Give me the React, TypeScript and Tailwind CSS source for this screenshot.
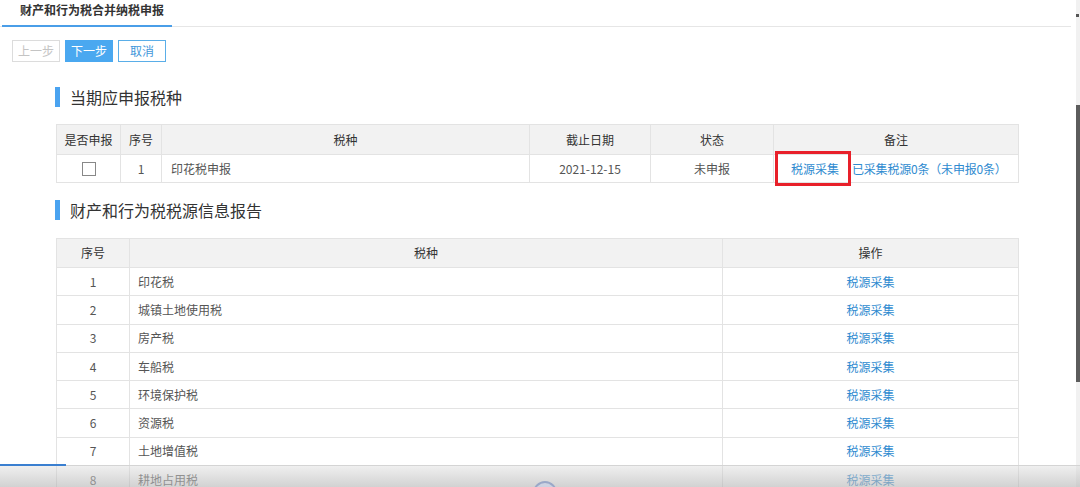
import React from "react";

const font = { fontFamily: '"Noto Sans CJK SC", "Microsoft YaHei", "Liberation Sans", sans-serif' };

const rows2 = ["印花税", "城镇土地使用税", "房产税", "车船税", "环境保护税", "资源税", "土地增值税", "耕地占用税"];

function SectionTitle({ text }: { text: string }) {
  return (
    <div className="flex items-center ml-[55px] h-[20px]">
      <div className="w-[5px] h-[20px] bg-[#4aa3f0]" />
      <div className="ml-[10px] text-[16px] leading-[20px] text-[#333]">{text}</div>
    </div>
  );
}

export default function App() {
  return (
    <div className="relative w-[1080px] h-[487px] overflow-hidden bg-white flex" style={font}>
      <div className="flex-1 flex flex-col">
        {/* tab bar */}
        <div className="h-[27px] w-[1071px] border-b border-[#e6e6e6] flex">
          <div className="ml-[2px] w-[170px] h-[27px] border-b-2 border-[#4a9ee8] pl-[18px] pt-[2px] text-[12px] leading-[16px] font-bold text-[#333]">
            财产和行为税合并纳税申报
          </div>
        </div>
        {/* buttons */}
        <div className="mt-[13px] ml-[12px] flex gap-[5px]">
          <div className="w-[48px] h-[22px] border border-[#dcdcdc] text-[#c4c4c4] text-[12px] flex items-center justify-center">上一步</div>
          <div className="w-[48px] h-[22px] bg-[#4aa8f0] text-white text-[12px] flex items-center justify-center">下一步</div>
          <div className="w-[48px] h-[22px] border border-[#5aaee8] text-[#3f97da] text-[12px] flex items-center justify-center">取消</div>
        </div>

        <div className="mt-[25px]">
          <SectionTitle text="当期应申报税种" />
        </div>

        {/* table 1 */}
        <div className="mt-[17px] ml-[56px] w-[963px] border border-[#e3e3e3] text-[12px] text-[#555]">
          <div className="flex h-[29px] bg-[#f2f2f2] text-[#333]">
            <div className="w-[64px] flex items-center justify-center border-r border-[#e3e3e3]">是否申报</div>
            <div className="w-[41px] flex items-center justify-center border-r border-[#e3e3e3]">序号</div>
            <div className="w-[368px] flex items-center justify-center border-r border-[#e3e3e3]">税种</div>
            <div className="w-[121px] flex items-center justify-center border-r border-[#e3e3e3]">截止日期</div>
            <div className="w-[123px] flex items-center justify-center border-r border-[#e3e3e3]">状态</div>
            <div className="flex-1 flex items-center justify-center">备注</div>
          </div>
          <div className="flex h-[28px] border-t border-[#e3e3e3]">
            <div className="w-[64px] flex items-center justify-center border-r border-[#e3e3e3]">
              <div className="w-[14px] h-[14px] border border-[#888] bg-white" />
            </div>
            <div className="w-[41px] flex items-center justify-center border-r border-[#e3e3e3]">1</div>
            <div className="w-[368px] flex items-center pl-[9px] border-r border-[#e3e3e3]">印花税申报</div>
            <div className="w-[121px] flex items-center justify-center border-r border-[#e3e3e3]">2021-12-15</div>
            <div className="w-[123px] flex items-center justify-center border-r border-[#e3e3e3]">未申报</div>
            <div className="relative flex-1 flex items-center pl-[17px] gap-[13px] text-[#2f8bd0]">
              <span>税源采集</span>
              <span className="tracking-[-0.2px]">已采集税源0条（未申报0条）</span>
              <div className="absolute left-[1px] top-[-4px] w-[76px] h-[35px] border-[3px] border-[#e8202a]" />
            </div>
          </div>
        </div>

        <div className="mt-[17px]">
          <SectionTitle text="财产和行为税税源信息报告" />
        </div>

        {/* table 2 */}
        <div className="mt-[18px] ml-[56px] w-[963px] border border-[#e3e3e3] text-[12px] text-[#555]">
          <div className="flex h-[28px] bg-[#f2f2f2] text-[#333]">
            <div className="w-[73px] flex items-center justify-center border-r border-[#e3e3e3]">序号</div>
            <div className="w-[593px] flex items-center justify-center border-r border-[#e3e3e3]">税种</div>
            <div className="flex-1 flex items-center justify-center">操作</div>
          </div>
          {rows2.map((r, i) => (
            <div key={r} className="flex h-[28.3px] border-t border-[#e3e3e3]">
              <div className="w-[73px] flex items-center justify-center border-r border-[#e3e3e3]">{i + 1}</div>
              <div className="w-[593px] flex items-center pl-[8px] border-r border-[#e3e3e3]">{r}</div>
              <div className="flex-1 flex items-center justify-center text-[#2f8bd0]">税源采集</div>
            </div>
          ))}
        </div>
      </div>

      {/* scrollbar */}
      <div className="w-[4px] h-[487px] bg-[#f1f1f1] flex flex-col">
        <div className="mt-[14px] h-[3px] w-[3px] bg-[#555]" />
        <div className="mt-[88px] h-[277px] w-[4px] bg-[#5c5c5c]" />
      </div>

      {/* bottom video-like overlay */}
      <div className="absolute left-0 right-0 bottom-0 h-[22px] border-t border-[#d4d4d4] bg-gradient-to-b from-[rgba(220,220,220,0.45)] to-[rgba(180,180,180,0.6)]">
        <div className="absolute left-[0px] top-[-2px] w-[66px] h-[2px] bg-[#3a7fd0]" />
        <div className="absolute left-[533px] top-[15px] w-[24px] h-[24px] rounded-full border-2 border-[#9aa8c8] bg-[rgba(200,210,235,0.6)]" />
      </div>
    </div>
  );
}
